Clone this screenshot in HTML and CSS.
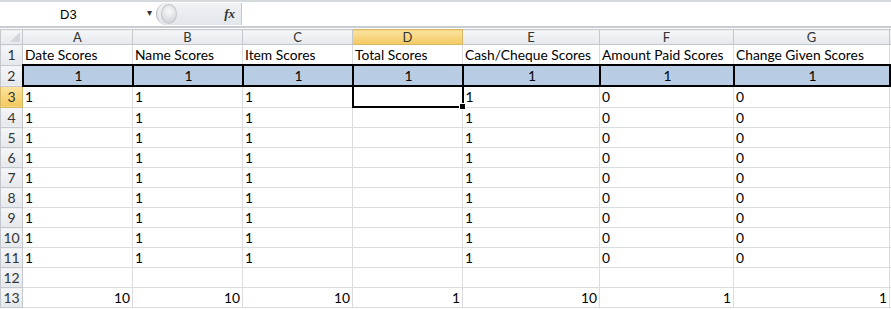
FILE: index.html
```html
<!DOCTYPE html>
<html lang="en">
<head>
  <meta charset="UTF-8" />
  <title>Scores</title>
  <link rel="stylesheet" href="styles.css">
</head>
<body>
  <div class="formula-bar">
    <div class="name-box">
      <span class="name">D3</span>
      <span class="drop">&#9662;</span>
    </div>
    <div class="fx-box">
      <span class="knob"></span>
      <span class="fx">fx</span>
    </div>
    <div class="formula-input"></div>
  </div>

  <table class="sheet">
    <colgroup>
      <col class="c-row">
      <col class="c-a"><col class="c-b"><col class="c-c"><col class="c-d">
      <col class="c-e"><col class="c-f"><col class="c-g"><col>
    </colgroup>
    <thead>
      <tr>
        <th class="corner"><span class="tri"></span></th>
        <th>A</th><th>B</th><th>C</th><th class="sel">D</th>
        <th>E</th><th>F</th><th>G</th><th class="rest"></th>
      </tr>
    </thead>
    <tbody id="body"></tbody>
  </table>

  <script>
    const rows = [
      ["Date Scores", "Name Scores", "Item Scores", "Total Scores", "Cash/Cheque Scores", "Amount Paid Scores", "Change Given Scores"],
      ["1", "1", "1", "1", "1", "1", "1"]
    ];
    for (let i = 0; i < 9; i++) rows.push(["1", "1", "1", "", "1", "0", "0"]);
    rows.push(["", "", "", "", "", "", ""]);
    rows.push(["10", "10", "10", "1", "10", "1", "1"]);

    const tbody = document.getElementById("body");
    rows.forEach((r, i) => {
      const n = i + 1;
      let cls = "";
      if (n === 2) cls = "key";
      if (n === 13) cls = "total";
      let html = `<tr class="${cls}"><th class="${n === 3 ? "sel" : ""}">${n}</th>`;
      r.forEach((v, j) => {
        const active = (n === 3 && j === 3) ? ' class="active"' : "";
        html += `<td${active}>${v}${active ? '<span class="handle"></span>' : ""}</td>`;
      });
      html += "<td></td></tr>";
      tbody.innerHTML += html;
    });
  </script>
</body>
</html>
```
FILE: styles.css
```css
body {
  margin: 0;
  background: white;
  font-family: Lato, "Open Sans", sans-serif;
  color: #000;
  overflow: hidden;
}

.formula-bar {
  display: flex;
  height: 24px;
  border-top: 2px solid #d5d8dc;
  border-bottom: 2px solid #c8ccd2;
  background: white;
}

.name-box {
  width: 156px;
  display: flex;
  align-items: center;
  position: relative;
  font-size: 13px;
}

.name {
  margin-left: 60px;
  font-family: "Liberation Sans", sans-serif;
}

.drop {
  position: absolute;
  right: 4px;
  top: 4px;
  font-size: 10px;
  color: #333;
}

.fx-box {
  width: 84px;
  margin: 1px 0;
  display: flex;
  align-items: center;
  justify-content: space-between;
  background: linear-gradient(#f0f2f5, #e3e6ea);
  border-radius: 12px 0 0 12px;
  border-left: 1px solid #b8bcc2;
  border-right: 1px solid #c5c9ce;
}

.knob {
  width: 14px;
  height: 18px;
  margin-left: 4px;
  border-radius: 50%;
  background: radial-gradient(circle at 50% 35%, #fafafa, #d6d9dd 70%);
  border: 1px solid #c2c6cb;
}

.fx {
  font-family: "Liberation Serif", serif;
  font-style: italic;
  font-weight: bold;
  font-size: 13px;
  color: #333;
  margin-right: 6px;
}

.formula-input {
  flex: 1;
}

.sheet {
  border-collapse: collapse;
  table-layout: fixed;
  width: 900px;
  margin-top: 1px;
  font-size: 13.8px;
}

.c-row { width: 22px; }
.c-a, .c-b, .c-c, .c-d { width: 110px; }
.c-e { width: 137px; }
.c-f { width: 134px; }
.c-g { width: 156px; }

th {
  font-weight: normal;
  color: #333;
  background: linear-gradient(#f5f6f8, #e5e8ec);
  border: 1px solid #c4c8cd;
  font-size: 13px;
  padding: 0;
}

thead th {
  height: 14px;
  line-height: 14px;
}

th.sel {
  background: linear-gradient(#fbe3a0, #f3c95f);
  border-color: #d8b764;
}

tbody th {
  height: 19px;
  line-height: 17px;
  font-size: 14px;
  text-align: center;
}

th.corner {
  position: relative;
}

.tri {
  position: absolute;
  right: 2px;
  bottom: 2px;
  border-left: 10px solid transparent;
  border-bottom: 10px solid #d3d6da;
}

td {
  height: 19px;
  padding: 0 0 0 2px;
  border: 1px solid #dadcdd;
  white-space: nowrap;
  overflow: hidden;
  line-height: 17px;
}

.key td {
  background: #b8cce4;
  border: 2px solid #000;
  text-align: center;
}

.key td:last-child {
  background: white;
  border: 1px solid #dadcdd;
  border-left: 2px solid #000;
}

.total td {
  text-align: right;
  padding: 0 2px 0 0;
}

td.active {
  border: 2px solid #000;
  position: relative;
  overflow: visible;
}

.handle {
  position: absolute;
  right: -4px;
  bottom: -4px;
  width: 5px;
  height: 5px;
  background: #000;
  border: 1px solid white;
}
```
